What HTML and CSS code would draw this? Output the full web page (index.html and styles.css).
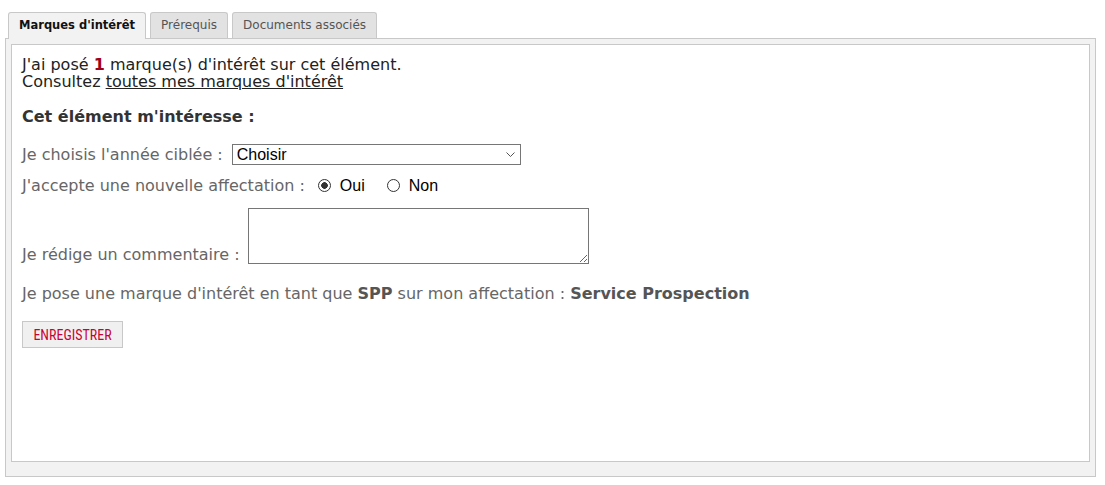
FILE: index.html
```html
<!DOCTYPE html>
<html lang="fr">
<head>
  <meta charset="UTF-8">
  <title>Marques d'intérêt</title>
  <link rel="stylesheet" href="styles.css">
</head>
<body>
  <!-- Onglets -->
  <ul class="tabs">
    <li class="tab active">Marques d'intérêt</li>
    <li class="tab">Prérequis</li>
    <li class="tab">Documents associés</li>
  </ul>

  <div class="panel">
    <div class="box">
      <p class="intro">J'ai posé <strong class="count">1</strong> marque(s) d'intérêt sur cet élément.<br>
      Consultez <a href="#">toutes mes marques d'intérêt</a></p>

      <h3 class="title">Cet élément m'intéresse :</h3>

      <form class="form">
        <div class="row row-year">
          <label for="annee">Je choisis l'année ciblée :</label>
          <span class="select-wrap">
            <select id="annee" class="select">
              <option>Choisir</option>
            </select>
            <svg class="chevron" width="9" height="5" viewBox="0 0 9 5"><path d="M0.5 0.5 L4.5 4.5 L8.5 0.5" fill="none" stroke="#555" stroke-width="1"/></svg>
          </span>
        </div>

        <div class="row row-radio">
          <span class="label">J'accepte une nouvelle affectation :</span>
          <label class="radio"><input type="radio" name="affectation" checked> Oui</label>
          <label class="radio"><input type="radio" name="affectation"> Non</label>
        </div>

        <div class="row row-comment">
          <label for="commentaire">Je rédige un commentaire :</label>
          <textarea id="commentaire" class="comment"></textarea>
        </div>

        <p class="role">Je pose une marque d'intérêt en tant que <b>SPP</b> sur mon affectation : <b>Service Prospection</b></p>

        <button type="button" class="save">Enregistrer</button>
      </form>
    </div>
  </div>
</body>
</html>
```

FILE: styles.css
```css
body {
  margin: 0;
  font-family: "DejaVu Sans", Verdana, sans-serif;
  font-size: 16px;
  color: #222;
  background: #fff;
}

.tabs {
  list-style: none;
  margin: 12px 0 0 8px;
  padding: 0;
  display: flex;
  align-items: flex-start;
  gap: 4px;
}

.tab {
  font-size: 12px;
  line-height: 15px;
  color: #555;
  background: #e2e2e2;
  border: 1px solid #c8c8c8;
  border-bottom: none;
  border-radius: 3px 3px 0 0;
  padding: 5px 10px 0;
  height: 20px;
}

.tab.active {
  font-size: 11.5px;
  font-weight: bold;
  color: #111;
  background: #f2f2f2;
  height: 21px;
  margin-bottom: -1px;
  position: relative;
}

.panel {
  margin: 0 9px 0 5px;
  height: 418px;
  background: #f2f2f2;
  border: 1px solid #c8c8c8;
  padding: 5px 5px 14px;
}

.box {
  height: 395px;
  background: #fff;
  border: 1px solid #c8c8c8;
  padding: 11px 10px 10px;
}

.intro {
  margin: 0;
  line-height: 17px;
}

.count {
  color: #a0001a;
}

.intro a {
  color: #222;
}

.title {
  margin: 17px 0 18px;
  font-size: 16px;
  line-height: 19px;
  color: #333;
}

.form {
  color: #666;
}

.row {
  display: flex;
  align-items: center;
  gap: 9px;
  line-height: 19px;
}

.row-year {
  height: 21px;
}

.row-radio {
  margin-top: 11px;
  gap: 0;
}

.row-radio .label {
  margin-right: 13px;
}

.row-comment {
  align-items: flex-end;
  margin-top: 13px;
  gap: 8px;
}

.select-wrap {
  position: relative;
  display: block;
}

.select {
  display: block;
  width: 289px;
  height: 21px;
  appearance: none;
  font-family: "Liberation Sans", Arial, sans-serif;
  font-size: 16px;
  color: #000;
  border: 1px solid #767676;
  border-radius: 0;
  background: #fff;
  padding: 0 4px;
  margin: 0;
}

.chevron {
  position: absolute;
  right: 6px;
  top: 8px;
  pointer-events: none;
}

.radio {
  display: flex;
  align-items: center;
  gap: 9px;
  margin-right: 22px;
  font-family: "Liberation Sans", Arial, sans-serif;
  font-size: 16px;
  color: #000;
}

.radio input {
  appearance: none;
  margin: 0;
  width: 13px;
  height: 13px;
  border: 1px solid #333;
  border-radius: 50%;
  background: #fff;
}

.radio input:checked {
  background: radial-gradient(circle, #333 0 3px, #fff 3.6px);
}

.comment {
  display: block;
  width: 341px;
  height: 56px;
  box-sizing: border-box;
  border: 1px solid #767676;
  margin: 0;
  padding: 1px;
}

.role {
  margin: 20px 0 18px;
  line-height: 19px;
}

.role b {
  color: #555;
}

.save {
  display: block;
  font-family: "Liberation Sans Narrow", "Roboto Condensed", "Liberation Sans", sans-serif;
  font-stretch: condensed;
  font-size: 14px;
  font-weight: normal;
  text-transform: uppercase;
  color: #cc0033;
  background: #f0f0f0;
  border: 1px solid #c8c8c8;
  width: 101px;
  height: 27px;
  padding: 0;
}
```
